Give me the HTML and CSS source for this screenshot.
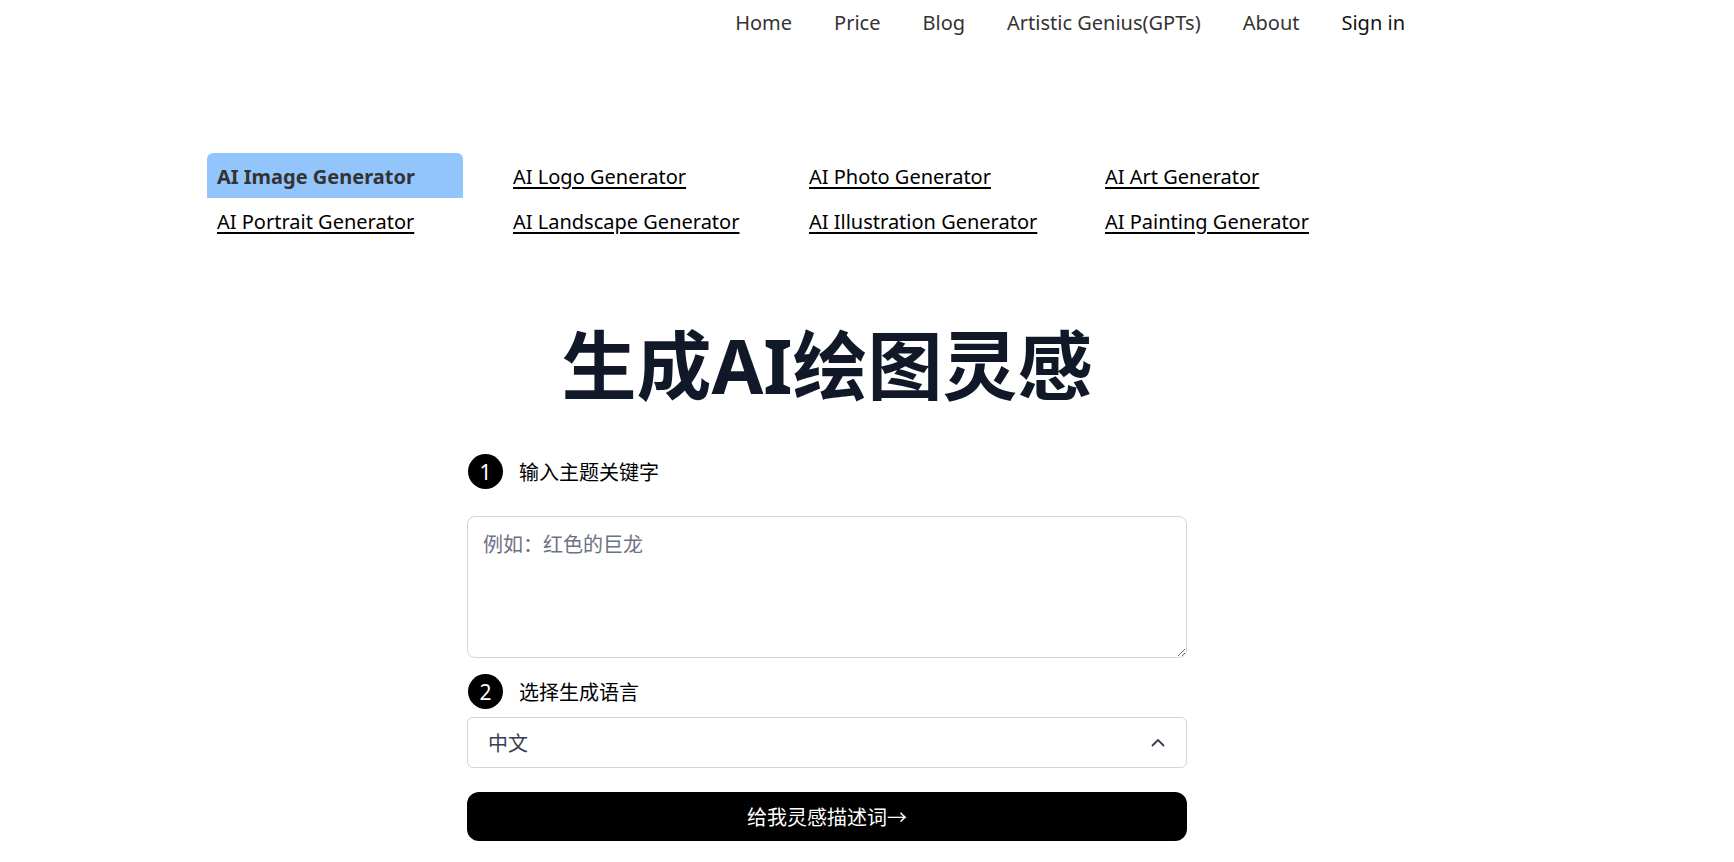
FILE: index.html
```html
<!DOCTYPE html>
<html lang="zh-CN">
<head>
    <meta charset="UTF-8">
    <meta name="viewport" content="width=device-width, initial-scale=1.0">
    <title>生成AI绘图灵感</title>
    <link rel="stylesheet" href="styles.css">
</head>
<body>
    <div class="page">
        <header class="topbar">
            <nav class="nav">
                <a href="#">Home</a>
                <a href="#">Price</a>
                <a href="#">Blog</a>
                <a href="#">Artistic Genius(GPTs)</a>
                <a href="#">About</a>
                <a href="#" class="signin">Sign in</a>
            </nav>
        </header>

        <div class="tools">
            <a href="#" class="active">AI Image Generator</a>
            <a href="#">AI Logo Generator</a>
            <a href="#">AI Photo Generator</a>
            <a href="#">AI Art Generator</a>
            <a href="#">AI Portrait Generator</a>
            <a href="#">AI Landscape Generator</a>
            <a href="#">AI Illustration Generator</a>
            <a href="#">AI Painting Generator</a>
        </div>

        <h1 class="title">生成AI绘图灵感</h1>

        <div class="form">
            <div class="step">
                <span class="num">1</span>
                <span>输入主题关键字</span>
            </div>
            <textarea class="keywords" placeholder="例如：红色的巨龙"></textarea>

            <div class="step step-two">
                <span class="num">2</span>
                <span>选择生成语言</span>
            </div>
            <div class="select">
                <span>中文</span>
                <svg width="16" height="16" viewBox="0 0 16 16" fill="none" stroke="#374151" stroke-width="1.8" stroke-linecap="round" stroke-linejoin="round"><path d="M2.5 10.5 L8 5 L13.5 10.5"/></svg>
            </div>

            <button class="go">给我灵感描述词→</button>
        </div>
    </div>
</body>
</html>
```

FILE: styles.css
```css
body {
    margin: 0;
    padding-right: 80px;
    background: #fff;
    font-family: "Noto Sans", "Noto Sans CJK SC", sans-serif;
    color: #000;
}
.page {
    max-width: 1240px;
    margin: 0 auto;
}
.topbar {
    display: flex;
    justify-content: flex-end;
    height: 44px;
    padding-right: 21px;
}
.nav {
    display: flex;
    align-items: center;
}
.nav a {
    padding: 0 21px;
    font-size: 20px;
    color: #333;
    text-decoration: none;
}
.nav a.signin {
    color: #111;
}
.tools {
    display: grid;
    grid-template-columns: repeat(4, 256px);
    column-gap: 40px;
    margin-top: 109px;
}
.tools a {
    display: block;
    height: 45px;
    box-sizing: border-box;
    padding: 2px 10px 0;
    line-height: 43px;
    font-size: 20px;
    color: #000;
    text-decoration: underline;
    text-underline-offset: 3px;
    white-space: nowrap;
}
.tools a.active {
    background: #93c5fd;
    color: #333;
    font-weight: 700;
    text-decoration: none;
    border-radius: 6px 6px 0 0;
}
.title {
    margin: 79px 0 0;
    font-size: 75px;
    line-height: 1.15;
    font-weight: 700;
    text-align: center;
    color: #111827;
}
.form {
    width: 720px;
    margin: 46px auto 0;
}
.step {
    display: flex;
    align-items: center;
    gap: 16px;
    font-size: 20px;
    margin-left: 1px;
}
.num {
    display: flex;
    align-items: center;
    justify-content: center;
    width: 35px;
    height: 35px;
    border-radius: 50%;
    background: #000;
    color: #fff;
    font-size: 21px;
}
.keywords {
    display: block;
    box-sizing: border-box;
    width: 100%;
    height: 142px;
    margin-top: 27px;
    padding: 12px 15px;
    border: 1px solid #d1d5db;
    border-radius: 8px;
    font-family: inherit;
    font-size: 20px;
    color: #111;
}
.keywords::placeholder {
    color: #6b7280;
}
.step-two {
    margin-top: 16px;
}
.select {
    display: flex;
    align-items: center;
    justify-content: space-between;
    box-sizing: border-box;
    height: 51px;
    margin-top: 8px;
    padding: 0 20px 0 20px;
    border: 1px solid #d1d5db;
    border-radius: 6px;
    font-size: 20px;
    color: #374151;
}
.go {
    display: block;
    width: 100%;
    height: 49px;
    margin-top: 24px;
    border: none;
    border-radius: 12px;
    background: #000;
    color: #fff;
    font-family: inherit;
    font-size: 20px;
    cursor: pointer;
}
```
